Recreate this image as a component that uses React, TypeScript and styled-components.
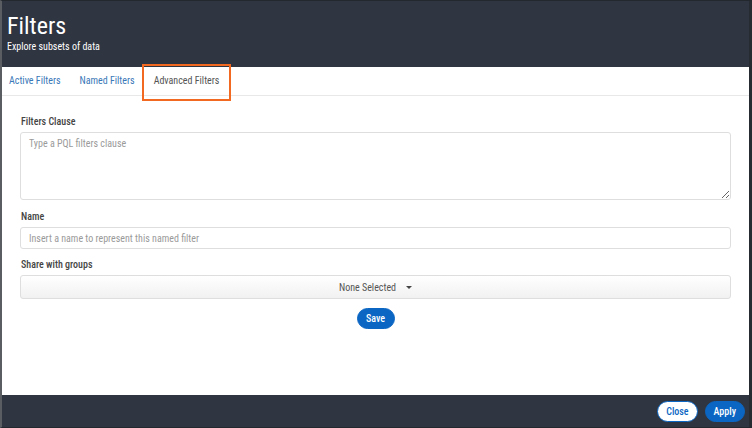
import React from 'react'
import styled, { createGlobalStyle, css } from 'styled-components'

const colors = {
    dark: '#2f3541',
    blue: '#0b66c3',
    link: '#3a78b8',
    label: '#444444',
    placeholder: '#9a9a9a',
    border: '#dedede',
    orange: '#f26a22',
}

const GlobalStyle = createGlobalStyle`
    html, body {
        margin: 0;
        padding: 0;
        background: #ffffff;
    }
    body {
        font-family: Roboto, "Liberation Sans", sans-serif;
        font-stretch: 80%;
    }
    * {
        box-sizing: border-box;
    }
`

const Frame = styled.div`
    width: 752px;
    height: 428px;
    display: flex;
    flex-direction: column;
    border-top: 1px solid #23272e;
    border-left: 2px solid #5a5d62;
    border-right: 3px solid #262a31;
    border-bottom: 1px solid #23272e;
    background: #fff;
`

const Header = styled.header`
    height: 66px;
    background: ${colors.dark};
    padding: 11px 5px 0;
    color: #fff;
`

const Title = styled.h1`
    margin: 0;
    font-size: 24px;
    font-stretch: 75%;
    font-weight: 400;
    line-height: 28px;
`

const Subtitle = styled.div`
    font-size: 10px;
    line-height: 14px;
`

const TabBar = styled.nav`
    height: 29px;
    display: flex;
    align-items: center;
    gap: 19px;
    padding-left: 7px;
    border-bottom: 1px solid #e8e8e8;
`

const Tab = styled.span<{ active?: boolean }>`
    position: relative;
    font-size: 10px;
    font-stretch: 77%;
    line-height: 12px;
    color: ${(p) => (p.active ? '#555' : colors.link)};
    cursor: pointer;
    ${(p) =>
        p.active &&
        css`
            &::after {
                content: '';
                position: absolute;
                left: -12px;
                right: -12px;
                top: -11px;
                bottom: -14px;
                border: 2px solid ${colors.orange};
            }
        `}
`

const Body = styled.main`
    flex: 1;
    padding: 20px 18px 0 18px;
    display: flex;
    flex-direction: column;
`

const Label = styled.label<{ gap?: number }>`
    display: block;
    font-size: 10px;
    font-weight: 500;
    color: ${colors.label};
    line-height: 12px;
    margin: ${(p) => p.gap ?? 0}px 0 4px 1px;
`

const fieldStyles = css`
    width: 100%;
    border: 1px solid ${colors.border};
    border-radius: 3px;
    font-family: inherit;
    font-stretch: 80%;
    font-size: 10px;
    color: #333;
    outline: none;
    &::placeholder {
        color: ${colors.placeholder};
    }
`

const TextArea = styled.textarea`
    ${fieldStyles}
    height: 68px;
    padding: 5px 8px;
    display: block;
`

const Input = styled.input`
    ${fieldStyles}
    height: 22px;
    padding: 0 8px;
`

const Select = styled.button`
    ${fieldStyles}
    height: 24px;
    display: flex;
    align-items: center;
    justify-content: center;
    gap: 10px;
    color: #555;
    background: linear-gradient(#ffffff, #f1f1f1);
    cursor: pointer;
`

const Caret = styled.span`
    width: 0;
    height: 0;
    border-left: 3px solid transparent;
    border-right: 3px solid transparent;
    border-top: 3px solid #444;
`

const Actions = styled.div`
    display: flex;
    justify-content: center;
    margin-top: 9px;
`

const Button = styled.button<{ variant?: 'primary' | 'outline' }>`
    height: 21px;
    min-width: 38px;
    padding: 0 8px;
    border-radius: 11px;
    font-family: inherit;
    font-stretch: 80%;
    font-size: 10px;
    font-weight: 500;
    cursor: pointer;
    ${(p) =>
        p.variant === 'outline'
            ? css`
                  background: #fff;
                  color: ${colors.blue};
                  border: 1px solid ${colors.blue};
              `
            : css`
                  background: ${colors.blue};
                  color: #fff;
                  border: 1px solid ${colors.blue};
              `}
`

const Footer = styled.footer`
    height: 32px;
    background: ${colors.dark};
    display: flex;
    align-items: center;
    justify-content: flex-end;
    gap: 7px;
    padding-right: 4px;
`

export default function App() {
    return (
        <>
            <GlobalStyle />
            <Frame>
                <Header>
                    <Title>Filters</Title>
                    <Subtitle>Explore subsets of data</Subtitle>
                </Header>
                <TabBar>
                    <Tab>Active Filters</Tab>
                    <Tab>Named Filters</Tab>
                    <Tab active>Advanced Filters</Tab>
                </TabBar>
                <Body>
                    <Label>Filters Clause</Label>
                    <TextArea placeholder="Type a PQL filters clause" />
                    <Label gap={11}>Name</Label>
                    <Input placeholder="Insert a name to represent this named filter" />
                    <Label gap={10}>Share with groups</Label>
                    <Select>
                        None Selected
                        <Caret />
                    </Select>
                    <Actions>
                        <Button>Save</Button>
                    </Actions>
                </Body>
                <Footer>
                    <Button variant="outline">Close</Button>
                    <Button>Apply</Button>
                </Footer>
            </Frame>
        </>
    )
}
